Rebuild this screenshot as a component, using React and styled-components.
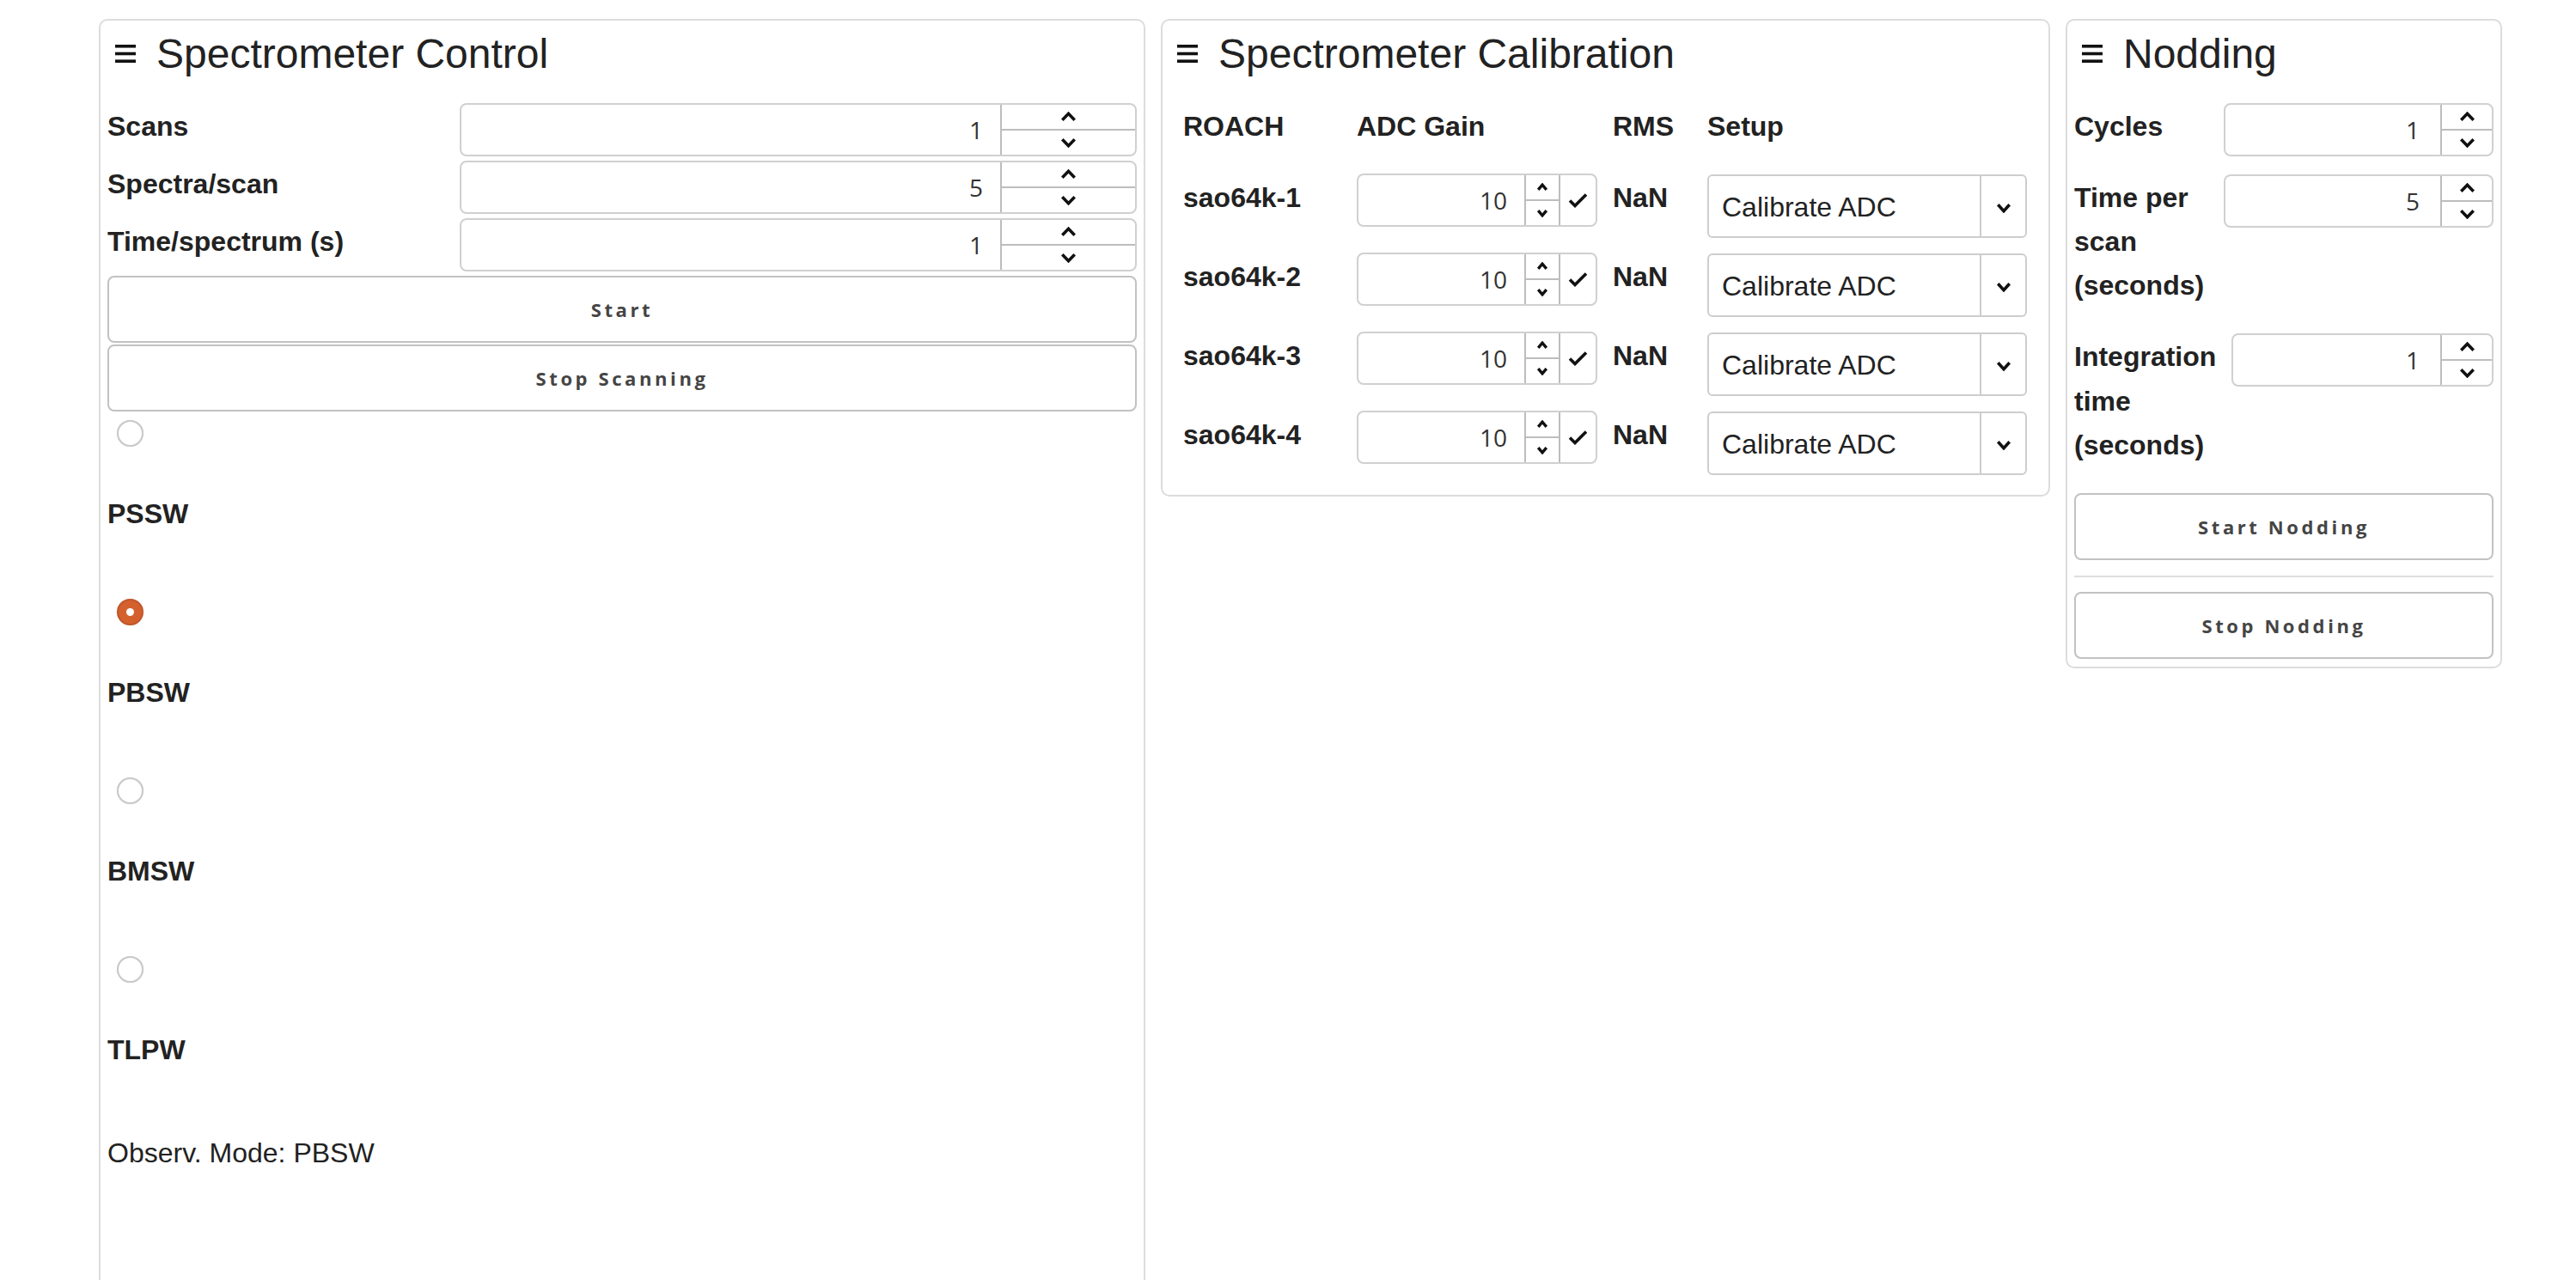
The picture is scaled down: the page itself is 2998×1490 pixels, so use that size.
import React from 'react';
import styled, { createGlobalStyle } from 'styled-components';

const GlobalStyle = createGlobalStyle`
  html, body { margin: 0; padding: 0; background: #fff; }
  body { font-family: "Liberation Sans", Arial, sans-serif; color: #222; }
  * { box-sizing: border-box; }
`;

const Page = styled.div`
  display: flex;
  align-items: flex-start;
  gap: 18px;
  padding: 22px 0 0 115px;
`;

const Panel = styled.section`
  flex: none;
  width: ${(p) => p.$width}px;
  border: 2px solid #dcdcdc;
  border-radius: 10px;
  padding: 10px 8px ${(p) => p.$padBottom}px;
  background: #fff;
`;

const PanelHeader = styled.h2`
  display: flex;
  align-items: center;
  gap: 24px;
  margin: 0 0 28px;
  padding-left: 9px;
  font-size: 48px;
  font-weight: 400;
  line-height: 1.2;
  color: #222;
`;

const MenuSvg = styled.svg`
  flex: none;
  display: block;
`;

const MenuIcon = () => (
  <MenuSvg width="24" height="21" viewBox="0 0 24 21">
    <rect x="0" y="0" width="24" height="3.6" fill="#111" />
    <rect x="0" y="8.7" width="24" height="3.6" fill="#111" />
    <rect x="0" y="17.4" width="24" height="3.6" fill="#111" />
  </MenuSvg>
);

const FieldGrid = styled.div`
  display: grid;
  grid-template-columns: 410px 1fr;
  row-gap: 5px;
`;

const FieldLabel = styled.label`
  padding-top: 2px;
  font-size: 32px;
  font-weight: 700;
  line-height: 51.2px;
  color: #222;
`;

const NumberBox = styled.div`
  display: flex;
  height: 62px;
  width: ${(p) => (p.$width ? `${p.$width}px` : 'auto')};
  flex: ${(p) => (p.$grow ? '1 1 auto' : 'none')};
  border: 2px solid #d0d0d0;
  border-radius: 8px;
  background: #fff;
  overflow: hidden;
`;

const NumberValue = styled.div`
  flex: 1;
  display: flex;
  align-items: center;
  justify-content: flex-end;
  padding-right: ${(p) => p.$pr}px;
  font-family: "Open Sans", "Liberation Sans", sans-serif;
  font-size: 28px;
  color: #333;
`;

const Spinner = styled.div`
  flex: none;
  width: ${(p) => p.$w}px;
  display: flex;
  flex-direction: column;
  border-left: 2px solid #bdbdbd;
`;

const SpinHalf = styled.div`
  flex: 1;
  display: flex;
  align-items: center;
  justify-content: center;
  & + & {
    border-top: 2px solid #bdbdbd;
  }
`;

const CheckCell = styled.div`
  flex: none;
  width: 43px;
  display: flex;
  align-items: center;
  justify-content: center;
  border-left: 2px solid #bdbdbd;
`;

const Chevron = ({ dir, w, h, sw = 3.6 }) => (
  <svg width={w} height={h} viewBox={`0 0 ${w} ${h}`} style={{ display: 'block' }}>
    <polyline
      points={
        dir === 'up'
          ? `${sw / 2 + 0.5},${h - sw / 2 - 0.5} ${w / 2},${sw / 2 + 0.5} ${w - sw / 2 - 0.5},${h - sw / 2 - 0.5}`
          : `${sw / 2 + 0.5},${sw / 2 + 0.5} ${w / 2},${h - sw / 2 - 0.5} ${w - sw / 2 - 0.5},${sw / 2 + 0.5}`
      }
      fill="none"
      stroke="#111"
      strokeWidth={sw}
      strokeLinejoin="miter"
    />
  </svg>
);

const CheckMark = () => (
  <svg width="23" height="18" viewBox="0 0 23 18" style={{ display: 'block' }}>
    <polyline points="2,9.5 8,15.5 21,2.5" fill="none" stroke="#111" strokeWidth="3.6" />
  </svg>
);

const NumberInput = ({ value, spinW, pr, chevW, chevH, chevSw, check, width, grow }) => (
  <NumberBox $width={width} $grow={grow}>
    <NumberValue $pr={pr}>{value}</NumberValue>
    <Spinner $w={spinW}>
      <SpinHalf>
        <Chevron dir="up" w={chevW} h={chevH} sw={chevSw} />
      </SpinHalf>
      <SpinHalf>
        <Chevron dir="down" w={chevW} h={chevH} sw={chevSw} />
      </SpinHalf>
    </Spinner>
    {check && (
      <CheckCell>
        <CheckMark />
      </CheckCell>
    )}
  </NumberBox>
);

const ActionButton = styled.button`
  display: block;
  width: 100%;
  height: 78px;
  margin: ${(p) => p.$mt || 0}px 0 0;
  border: 2px solid #c2c2c2;
  border-radius: 8px;
  background: #fff;
  font-family: "Open Sans", "DejaVu Sans", sans-serif;
  font-weight: 700;
  font-size: 22px;
  letter-spacing: 3.6px;
  color: #454545;
  cursor: pointer;
`;

const ModeList = styled.div`
  display: flex;
  flex-direction: column;
`;

const ModeOption = styled.div`
  display: flex;
  flex-direction: column;
  align-items: flex-start;
  padding-top: 10px;
  margin-bottom: 63px;
`;

const Radio = styled.span`
  display: flex;
  align-items: center;
  justify-content: center;
  width: 31px;
  height: 31px;
  margin-left: 11px;
  border-radius: 50%;
  border: 2px solid ${(p) => (p.$checked ? '#c2562a' : '#c9c9c9')};
  background: ${(p) => (p.$checked ? '#d4612d' : '#fff')};
  box-shadow: 0 0 1px rgba(0, 0, 0, 0.15);
  &::after {
    content: '';
    width: 9px;
    height: 9px;
    border-radius: 50%;
    background: ${(p) => (p.$checked ? '#fff' : 'transparent')};
  }
`;

const ModeLabel = styled.label`
  margin-top: 53px;
  font-size: 32px;
  font-weight: 700;
  line-height: 51.2px;
  color: #222;
`;

const ModeStatus = styled.div`
  margin-top: 6px;
  font-size: 32px;
  line-height: 51.2px;
  color: #222;
`;

const CalGrid = styled.div`
  display: grid;
  grid-template-columns: 202px 298px 110px 372px;
  row-gap: 17px;
  padding: 0 16px;
  align-items: start;
`;

const CalHead = styled.div`
  height: 65px;
  padding-top: 2px;
  font-size: 32px;
  font-weight: 700;
  line-height: 51.2px;
  color: #222;
`;

const CalCell = styled.div`
  padding-top: 3px;
  font-size: 32px;
  font-weight: 700;
  line-height: 51.2px;
  color: #222;
`;

const SelectBox = styled.div`
  display: flex;
  height: 74px;
  margin-top: 1px;
  border: 2px solid #cdcdcd;
  border-radius: 6px;
  background: #fff;
`;

const SelectText = styled.div`
  flex: 1;
  display: flex;
  align-items: center;
  padding: 3px 0 0 15px;
  font-size: 32px;
  color: #222;
`;

const SelectArrow = styled.div`
  flex: none;
  width: 53px;
  display: flex;
  align-items: center;
  justify-content: center;
  padding-top: 4px;
  border-left: 2px solid #cdcdcd;
`;

const NodForm = styled.div`
  display: flex;
  flex-direction: column;
  gap: 21px;
`;

const NodRow = styled.div`
  display: flex;
  align-items: flex-start;
`;

const NodLabel = styled.label`
  flex: none;
  width: ${(p) => p.$w}px;
  padding: 2px 0 9px;
  font-size: 32px;
  font-weight: 700;
  line-height: 51.2px;
  color: #222;
`;

const Divider = styled.hr`
  margin: 18px 0 17px;
  border: none;
  border-top: 2px solid #dedede;
`;

const roaches = ['sao64k-1', 'sao64k-2', 'sao64k-3', 'sao64k-4'];
const modes = [
  { name: 'PSSW', checked: false },
  { name: 'PBSW', checked: true },
  { name: 'BMSW', checked: false },
  { name: 'TLPW', checked: false },
];

export default function App() {
  return (
    <>
      <GlobalStyle />
      <Page>
        <Panel $width={1218} $padBottom={170}>
          <PanelHeader>
            <MenuIcon />
            Spectrometer Control
          </PanelHeader>
          <FieldGrid>
            <FieldLabel>Scans</FieldLabel>
            <NumberInput value="1" spinW={157} pr={20} chevW={19} chevH={12} />
            <FieldLabel>Spectra/scan</FieldLabel>
            <NumberInput value="5" spinW={157} pr={20} chevW={19} chevH={12} />
            <FieldLabel>Time/spectrum (s)</FieldLabel>
            <NumberInput value="1" spinW={157} pr={20} chevW={19} chevH={12} />
          </FieldGrid>
          <ActionButton $mt={5}>Start</ActionButton>
          <ActionButton $mt={2}>Stop Scanning</ActionButton>
          <ModeList>
            {modes.map((m) => (
              <ModeOption key={m.name}>
                <Radio $checked={m.checked} />
                <ModeLabel>{m.name}</ModeLabel>
              </ModeOption>
            ))}
          </ModeList>
          <ModeStatus>Observ. Mode: PBSW</ModeStatus>
        </Panel>

        <Panel $width={1035} $padBottom={23}>
          <PanelHeader>
            <MenuIcon />
            Spectrometer Calibration
          </PanelHeader>
          <CalGrid>
            <CalHead>ROACH</CalHead>
            <CalHead>ADC Gain</CalHead>
            <CalHead>RMS</CalHead>
            <CalHead>Setup</CalHead>
            {roaches.map((r) => (
              <React.Fragment key={r}>
                <CalCell>{r}</CalCell>
                <NumberInput
                  value="10"
                  spinW={40}
                  pr={20}
                  chevW={14}
                  chevH={10}
                  chevSw={3.4}
                  check
                  width={280}
                />
                <CalCell>NaN</CalCell>
                <SelectBox>
                  <SelectText>Calibrate ADC</SelectText>
                  <SelectArrow>
                    <Chevron dir="down" w={18} h={12} sw={3.6} />
                  </SelectArrow>
                </SelectBox>
              </React.Fragment>
            ))}
          </CalGrid>
        </Panel>

        <Panel $width={508} $padBottom={9}>
          <PanelHeader>
            <MenuIcon />
            Nodding
          </PanelHeader>
          <NodForm>
            <NodRow>
              <NodLabel $w={174}>Cycles</NodLabel>
              <NumberInput value="1" spinW={60} pr={24} chevW={19} chevH={12} grow />
            </NodRow>
            <NodRow>
              <NodLabel $w={174}>Time per scan (seconds)</NodLabel>
              <NumberInput value="5" spinW={60} pr={24} chevW={19} chevH={12} grow />
            </NodRow>
            <NodRow>
              <NodLabel $w={183}>Integration time (seconds)</NodLabel>
              <NumberInput value="1" spinW={60} pr={24} chevW={19} chevH={12} grow />
            </NodRow>
          </NodForm>
          <ActionButton $mt={21}>Start Nodding</ActionButton>
          <Divider />
          <ActionButton>Stop Nodding</ActionButton>
        </Panel>
      </Page>
    </>
  );
}
